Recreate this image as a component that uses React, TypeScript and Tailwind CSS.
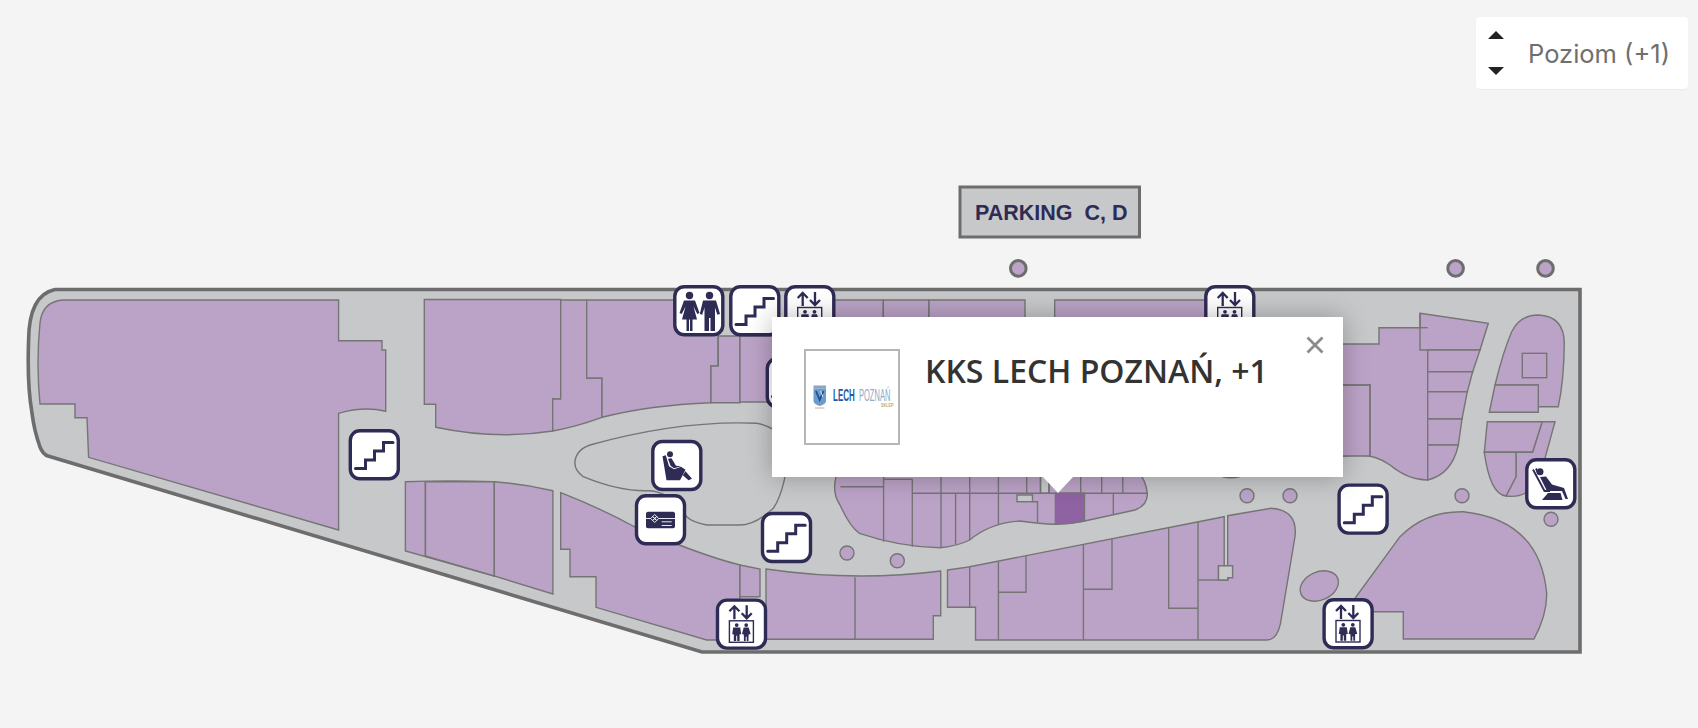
import React from "react";

const SHOP = "#bba3c7";
const LINE = "#757575";
const FLOOR = "#c7c8ca";
const NAVY = "#2e2b55";

const shops = [
  // left anchor
  "M62.5 300H338.6V340.7H382V350H385.7V411.3Q364 406 338.6 413.3V530L88.6 457.3L87 417.7H75V404H40Q36 363 40 323Q42 302 62.5 300Z",
  // top middle row
  "M424.3 299.5H560.7V399H552.7V431Q496 440 435.7 427.3V404.3H424.3Z",
  "M560.7 300H586.7V378H602V417.3Q575 427 552.7 431V399H560.7Z",
  "M586.7 300H718V366H711V402.7Q650 405 602 417.3V378H586.7Z",
  "M718.3 336H740V402.7H711V366H718.3Z",
  "M740 336H800V402H740Z",
  "M800 300H883.3V340H800Z",
  "M883.3 300H929V340H883.3Z",
  "M929 300H1025V340H929Z",
  "M1054.7 300H1206V340H1054.7Z",
  // right of the popup
  "M1300 344H1379V327.7H1427.7V480Q1408 480 1390 465Q1372 452 1346.7 456H1300Z",
  "M1300 385H1370V456H1300Z",
  "M1420 313.3L1488.3 323.3L1480 350H1420Z",
  "M1427.7 350H1480L1472.7 371.7H1427.7Z",
  "M1427.7 371.7H1472.7L1467.3 391.7H1427.7Z",
  "M1427.7 391.7H1467.3L1462 419H1427.7Z",
  "M1427.7 419H1462L1458.3 445H1427.7Z",
  "M1427.7 445H1458.3Q1452 474 1427.7 480Z",
  "M1495 385Q1503 352 1511.7 331.7Q1520 315 1538.3 315Q1564 316 1564.3 343.3Q1564 380 1558.3 406.7H1538.3V385Z",
  "M1495 385H1538.3V412.3H1489.3Z",
  "M1487.3 421.7H1542.3L1532.7 452.3H1484.3Z",
  "M1542.3 421.7H1555L1545 458.3L1530 490Q1520 498 1506 496L1516 476.7V452.3H1532.7Z",
  "M1484.3 452.3H1516V476.7L1506 496Q1490 494 1484.3 452.3Z",
  "M1463.3 511.7Q1425 511 1400 536.7L1355 598.3V611.7H1403.3V639H1534Q1547 615 1546.7 593.3Q1540 520 1463.3 511.7Z",
  // lower left
  "M405.4 481.7Q450 480 494.6 481.7L494.3 576L405.4 551Z",
  "M425.4 481.7H494.3V576L425.4 556Z",
  "M494.3 481.7Q525 484 552.9 490.7V594L494.3 576Z",
  "M560.7 492.7Q600 508 633 526Q700 555 740 565V600H725V640H706.7L596 607.3V576.7H570V549.3H560.7Z",
  "M740 565L760 569V596.7H740Z",
  "M766 569Q855 582 940.7 571V615.7H933.3V639.3H766Z",
  // lower centre
  "M947.5 570L969.7 566.7V607.3H947.5Z",
  "M969.7 566.7L1224.2 516.7V565.7H1218.5V580H1227.7V515.7L1271 508.3Q1298 510 1295 536.7L1280.5 623.3Q1277 640 1267 640H975.5V607.3H969.7Z",
  // central cluster under the popup
  "M838.5 470Q830 490 840 505Q850 527 859.5 533.3Q900 547 940 547.7Q958 546 969.7 540Q990 523 1020 521Q1040 524 1055.4 524.3Q1070 524 1084.5 521L1135 510Q1148 505 1147.3 493.3Q1146 480 1137 470Z",
];

const lines = [
  // shop dividers
  "M1300 385H1370V456",
  "M1420 313.3V327.7",
  "M1420 327.7H1427.7",
  "M425.4 481.7V556",
  "M855 577.3V639.3",
  // lower centre
  "M998.4 561.7V640",
  "M998.4 592.3H1026V556",
  "M1083.4 544.3V640",
  "M1083.4 589.3H1112V539",
  "M1168.7 527.7V608.3H1198",
  "M1198 521.7V640",
  "M1198 580H1218.5",
  // central cluster
  "M840.4 486.7H883.6",
  "M883.6 479.3H912.3",
  "M883.6 476V541.7",
  "M912.3 479.3V546.7",
  "M912.3 493.3H1147.3",
  "M941 476V547.7",
  "M955.6 493.3V544",
  "M969.7 476V540",
  "M998.4 476V525",
  "M1026.7 476V493.3",
  "M1040.5 476V493.3",
  "M1049 476V493.3",
  "M1080.7 476V493.3",
  "M1101.7 476V493.3",
  "M1122.8 476V493.3",
  "M1032.5 501.7H1037.5V522.3",
  "M1113.3 493.3V515",
  "M1222 476.5Q1231 479 1240 476.5",
];

const dots: [number, number, number][] = [
  [631.3, 463.7, 9],
  [742.7, 451.3, 9],
  [847, 553, 7],
  [897.3, 560.7, 7],
  [1247, 495.7, 7],
  [1290, 495.7, 7],
  [1462, 495.7, 7],
  [1551, 519.3, 7],
];

const topDots = [1018.3, 1455.6, 1545.5];

type IconProps = { x: number; y: number };

const Frame = ({ x, y, children }: IconProps & { children?: React.ReactNode }) => (
  <g transform={`translate(${x} ${y})`}>
    <rect x="0.8" y="0.8" width="48" height="48" rx="9.500" fill="#fff" stroke={NAVY} strokeWidth="3.4" />
    {children}
  </g>
);

const Stairs = (p: IconProps) => (
  <Frame {...p}>
    <path
      d="M6 38.5H16V30H25V21H34V12.5H43.5"
      fill="none"
      stroke={NAVY}
      strokeWidth="3"
      strokeLinecap="round"
    />
  </Frame>
);

const Lift = (p: IconProps) => (
  <Frame {...p}>
    <g fill="none" stroke={NAVY} strokeWidth="2.3">
      <path d="M17.7 20V7M12.7 12L17.7 7L22.7 12" />
      <path d="M30 6V19M25 14L30 19L35 14" />
    </g>
    <rect x="12.7" y="21.5" width="24" height="21.5" fill="none" stroke={NAVY} strokeWidth="1.4" />
    <g fill={NAVY}>
      <circle cx="20" cy="25.8" r="1.9" />
      <circle cx="29.5" cy="25.8" r="1.9" />
      <path d="M16.5 28.3H23.5L24.5 35H22.9V41.7H20.5V36.5H19.5V41.7H17.1V35H15.5Z" />
      <path d="M27 28.3H32L34 35H32L31.8 37.5V41.7H30V37.5H29V41.7H27.2V37.5L27 35H25.2Z" />
    </g>
  </Frame>
);

const Toilets = (p: IconProps) => (
  <Frame {...p}>
    <g fill={NAVY}>
      <circle cx="15.5" cy="9.5" r="3.7" />
      <circle cx="35.5" cy="9.5" r="3.7" />
      <path d="M10 14.5H21L25.5 27L23.3 28L19.5 20.5L23 33.5H18.5V45H16V33.5H15V45H12.5V33.5H8L11.5 20.5L7.7 28L5.5 27Z" />
      <path d="M29 14.5H42L46 28L43.3 28.7L41 21.5V45H36.5V32H35V45H30.5V21.5L28.2 28.7L25.8 28Z" />
    </g>
  </Frame>
);

const Seat = (p: IconProps) => (
  <Frame {...p}>
    <g fill={NAVY}>
      <circle cx="18" cy="13.5" r="3" />
      <path d="M10.5 15.5L13.8 14.5L17 25.5L22 28.5L29 26L33.5 29L28 39.5H14.5Z" />
      <path d="M16 18L19.5 17.5L24 25L29 25.5L22 27.5L18.5 25Z" />
      <path d="M33.5 30.5L40 38L36.5 39.5L30.8 34.5Z" />
    </g>
  </Frame>
);

const Card = (p: IconProps) => (
  <Frame {...p}>
    <rect x="10.3" y="16.7" width="29" height="16.6" rx="2" fill={NAVY} />
    <g fill="none" stroke="#fff" strokeWidth="0.9">
      <path d="M10.3 23.5H15M23 23.5H39.3" />
      <path d="M19 19.5L21 21.5L19 23.5L17 21.5ZM19 23.5L21 25.5L19 27.5L17 25.5ZM15 23.5L17 21.5L19 23.5L17 25.5ZM23 23.5L21 21.5L19 23.5L21 25.5Z" />
      <path d="M26 26.8H36M26 30.5H36" />
    </g>
  </Frame>
);

const Massage = (p: IconProps) => (
  <Frame {...p}>
    <path d="M7 10.5L18.5 32H24" fill="none" stroke={NAVY} strokeWidth="1.9" />
    <path d="M10 9.5L12 14" fill="none" stroke={NAVY} strokeWidth="1.9" />
    <g fill={NAVY}>
      <circle cx="14" cy="12.8" r="3.5" />
      <path d="M14 18L20 17.5L26 25.5L38 29L42 40H39.5L36 32H21Z" />
      <path d="M22 34H34.5L36.5 41H16Z" />
    </g>
  </Frame>
);

const Crest = () => (
  <g>
    <rect x="9.5" y="36.5" width="12.5" height="3" fill="#8aa6bf" />
    <path d="M9.5 39.5H22V52Q22 55 15.7 57Q9.5 55 9.5 52Z" fill="#6d9ccb" />
    <path d="M12 42L15.7 51L19.5 42" fill="none" stroke="#1d4f91" strokeWidth="1.8" />
    <path d="M16.5 42L19 48" stroke="#dbe6f1" strokeWidth="1" />
    <path d="M11 59H20.5" stroke="#d9c6a3" strokeWidth="1.4" />
  </g>
);

const ShopLogo = () => (
  <svg viewBox="0 0 92 92" className="w-[92px] h-[92px]">
    <g transform="translate(-2 -2)">
      <Crest />
      <text
        transform="translate(29 51.7) scale(0.5 1)"
        fontFamily="Liberation Sans, sans-serif"
        fontWeight="700"
        fontSize="16"
        fill="#1f5aa6"
      >
        LECH
      </text>
      <text
        transform="translate(55 51.7) scale(0.47 1)"
        fontFamily="Liberation Sans, sans-serif"
        fontSize="16"
        fill="#8fa9c9"
      >
        POZNAŃ
      </text>
      <text
        transform="translate(77 57.5) scale(0.75 1)"
        fontFamily="Liberation Sans, sans-serif"
        fontWeight="700"
        fontSize="5"
        fill="#c8a46f"
      >
        SKLEP
      </text>
    </g>
  </svg>
);

const MallMap = () => (
  <svg viewBox="0 0 1698 728" className="block w-[1698px] h-[728px]">
    <path
      d="M55 289.5H1580V652H702L48 456Q43 454.500 40 447Q34 430 32 413Q27 385 28.6 340Q29 295 55 289.5Z"
      fill={FLOOR}
      stroke="#6d6d6d"
      strokeWidth="3.6"
    />
    <g fill={SHOP} stroke={LINE} strokeWidth="1.4">
      {shops.map((d) => (
        <path key={d} d={d} />
      ))}
      <rect x="1522.3" y="353.3" width="24.4" height="24.4" />
      <ellipse cx="1319.3" cy="586" rx="20" ry="14" transform="rotate(-24 1319.3 586)" />
      {dots.map(([cx, cy, r]) => (
        <circle key={cx} cx={cx} cy={cy} r={r} />
      ))}
    </g>
    <path
      d="M1055.4 493.3H1084.5V521Q1070 524 1055.4 524.3Z"
      fill="#8f62a3"
      stroke={LINE}
      strokeWidth="1.4"
    />
    <g fill={FLOOR} stroke={LINE} strokeWidth="1.4">
      <rect x="1040.5" y="476" width="8.5" height="17.3" />
      <rect x="1017" y="495" width="15.5" height="6.7" />
      <path d="M1218.5 565.7H1232.6V577.7H1227.7V580H1218.5Z" />
      <path d="M575 461.7Q576 450 590 445Q680 420 756.7 423.3Q770 425 790 440Q786 490 773.3 508.3Q755 525 740 525H706.7Q692 522 686.7 516.7Q670 492 650 490.7Q620 492 583.3 476.7Q574 470 575 461.7Z" />
    </g>
    <g fill="none" stroke={LINE} strokeWidth="1.4">
      {lines.map((d) => (
        <path key={d} d={d} />
      ))}
    </g>
    <g fill={SHOP} stroke="#6d6d6d" strokeWidth="3">
      {topDots.map((cx) => (
        <circle key={cx} cx={cx} cy="268.4" r="7.8" />
      ))}
    </g>
    <rect x="960" y="187" width="179.5" height="50" fill={FLOOR} stroke="#6d6d6d" strokeWidth="3" />
    <text
      x="975"
      y="220"
      fontFamily="Liberation Sans, sans-serif"
      fontWeight="700"
      fontSize="21.5"
      fill={NAVY}
      xmlSpace="preserve"
    >
      PARKING  C, D
    </text>
    <Stairs x={349.5} y={430} />
    <Toilets x={674} y={286} />
    <Stairs x={730} y={286} />
    <Lift x={785} y={286} />
    <Stairs x={766.5} y={358} />
    <Lift x={1205} y={286} />
    <Card x={635.7} y={495} />
    <Seat x={652} y={440.7} />
    <Stairs x={761.7} y={512.7} />
    <Lift x={716.7} y={599.3} />
    <Stairs x={1338.3} y={484.3} />
    <Lift x={1323.3} y={599} />
    <Massage x={1526} y={459} />
  </svg>
);

const LevelPicker = () => (
  <div className="absolute top-[17px] left-[1476px] w-[212px] h-[72px] flex items-center bg-white rounded-[4px] shadow-[0_1px_1px_rgba(0,0,0,0.04)]">
    <div className="flex flex-col justify-between h-[44px] ml-[12px] w-[16px]">
      <div className="w-0 h-0 border-x-[8px] border-x-transparent border-b-[8px] border-b-[#222222]" />
      <div className="w-0 h-0 border-x-[8px] border-x-transparent border-t-[8px] border-t-[#222222]" />
    </div>
    <span className="ml-[24px] mt-[3px] text-[25.5px] text-[#6f6f6f] font-['Inter',sans-serif] whitespace-nowrap">
      Poziom (+1)
    </span>
  </div>
);

const ShopPopup = () => (
  <div className="absolute top-[317px] left-[772px] w-[571px] h-[160px] bg-white p-[32px] flex gap-[25px] shadow-[0_0_24px_rgba(0,0,0,0.28)]">
    <div className="w-[96px] h-[96px] border-2 border-[#b5b5b5]">
      <ShopLogo />
    </div>
    <h2 className="text-[32px] leading-[44px] font-semibold text-[#333333] font-['Open_Sans',sans-serif] whitespace-nowrap">
      KKS LECH POZNAŃ, +1
    </h2>
    <svg viewBox="0 0 18 18" className="absolute top-[19px] right-[19px] w-[18px] h-[18px]">
      <path d="M1.5 1.5L16.5 16.5M16.5 1.5L1.5 16.5" stroke="#8c8c8c" strokeWidth="2.8" />
    </svg>
    <div className="absolute top-full left-[271px] w-0 h-0 border-x-[15px] border-x-transparent border-t-[16px] border-t-white" />
  </div>
);

const App = () => {
  return (
    <div className="relative w-[1698px] h-[728px] overflow-hidden bg-[#f4f4f4]">
      <MallMap />
      <ShopPopup />
      <LevelPicker />
    </div>
  );
};

export default App;
